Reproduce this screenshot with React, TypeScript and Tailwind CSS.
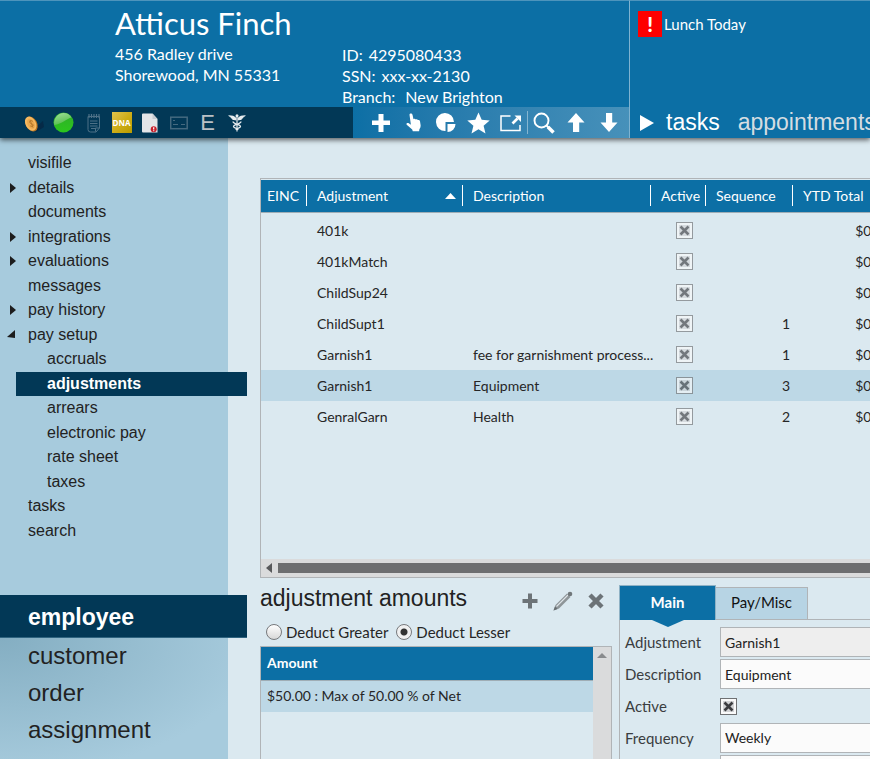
import type { ReactNode } from "react";
import clsx from "clsx";

const menu = [
  { label: "visifile" },
  { label: "details", arrow: "closed" },
  { label: "documents" },
  { label: "integrations", arrow: "closed" },
  { label: "evaluations", arrow: "closed" },
  { label: "messages" },
  { label: "pay history", arrow: "closed" },
  { label: "pay setup", arrow: "open" },
  { label: "accruals", child: true },
  { label: "adjustments", child: true, active: true },
  { label: "arrears", child: true },
  { label: "electronic pay", child: true },
  { label: "rate sheet", child: true },
  { label: "taxes", child: true },
  { label: "tasks" },
  { label: "search" },
];

const sections = ["customer", "order", "assignment"];

const rows = [
  { name: "401k", description: "", sequence: "" },
  { name: "401kMatch", description: "", sequence: "" },
  { name: "ChildSup24", description: "", sequence: "" },
  { name: "ChildSupt1", description: "", sequence: "1" },
  { name: "Garnish1", description: "fee for garnishment process...", sequence: "1" },
  { name: "Garnish1", description: "Equipment", sequence: "3", selected: true },
  { name: "GenralGarn", description: "Health", sequence: "2" },
];

function IconButton({ label, className, children }: { label: string; className?: string; children: ReactNode }) {
  return (
    <button type="button" aria-label={label} className={clsx("flex items-center justify-center leading-none", className)}>
      {children}
    </button>
  );
}

function Check({ id, label, muted }: { id?: string; label?: string; muted?: boolean }) {
  return (
    <span className={clsx("inline-grid size-[17px] align-middle", muted && "opacity-65")}>
      <input
        id={id}
        type="checkbox"
        defaultChecked
        aria-label={label}
        className="col-start-1 row-start-1 size-[17px] appearance-none border border-[#6f7173] bg-[#d2d3d5] shadow-[inset_0_0_0_2px_#fafafa]"
      />
      <svg viewBox="0 0 17 17" className="pointer-events-none col-start-1 row-start-1 size-[17px]">
        <path d="M4.500 4.500l8 8M12.500 4.500l-8 8" stroke="#3c3d40" strokeWidth="2.600" />
      </svg>
    </span>
  );
}

function StatusBar() {
  return (
    <div className="flex w-[353px] bg-[#023856] pl-5">
      <IconButton label="Pay" className="w-7">
        <svg width="24" height="24" viewBox="0 0 24 24">
          <path d="M12 18l9-8 1 6-8 5z" fill="#052a47" />
          <ellipse cx="9.5" cy="13" rx="5.6" ry="8" transform="rotate(-28 9.5 13)" fill="#b87420" />
          <ellipse cx="8.7" cy="12.6" rx="5.2" ry="7.6" transform="rotate(-28 8.7 12.6)" fill="#f6b961" />
          <ellipse cx="9" cy="12.8" rx="3.4" ry="5.4" transform="rotate(-28 9 12.8)" fill="#eba94e" />
          <path d="M10.8 10.4c-1.4-1.5-4-.4-3 1.3.9 1.4 3 .7 3.4 2.3.3 1.6-2 2-3 .8M8 9l3 7.6" stroke="#b97a2c" fill="none" />
        </svg>
      </IconButton>
      <IconButton label="Status" className="w-[31px]">
        <svg width="21" height="21" viewBox="0 0 21 21">
          <defs>
            <linearGradient id="green" x1="0" y1="0" x2="0" y2="1">
              <stop offset="0" stopColor="#2fae2a" />
              <stop offset="1" stopColor="#2cc61d" />
            </linearGradient>
            <linearGradient id="shine" x1="0" y1="0" x2="0.4" y2="1">
              <stop offset="0" stopColor="#a2e09b" />
              <stop offset="1" stopColor="#54bd4b" />
            </linearGradient>
          </defs>
          <circle cx="10.5" cy="10.5" r="10" fill="url(#green)" />
          <path d="M1.200 13C.300 6 5 1 10.500 1c4 0 6.700 2 8 4.500C14 6.500 9 12 1.200 13z" fill="url(#shine)" />
        </svg>
      </IconButton>
      <IconButton label="Notes" className="w-[29px]">
        <svg width="15" height="20" viewBox="0 0 15 20" fill="none" stroke="#4d7187">
          <path d="M2 3.500h11.500V15L10 19H4.500a2.500 2.500 0 0 1-2.500-2.500z" />
          <path d="M3 1v4M5.500 1v4M8 1v4M10.500 1v4M13 1v4" strokeWidth="1.200" />
          <path d="M4 8h7.500M4 10.500h7.500M4 13h7.500M5 15.500h4M9.500 18.500v-3.500h4" />
        </svg>
      </IconButton>
      <IconButton label="DNA" className="w-[27px]">
        <span className="flex h-[21px] w-5 items-center justify-center bg-linear-to-br from-[#dfc34a] via-[#cfae17] to-[#b99b00] font-['Open_Sans',sans-serif] text-[8px] font-bold text-white">
          DNA
        </span>
      </IconButton>
      <IconButton label="Document" className="w-[29px]">
        <svg width="16" height="20" viewBox="0 0 16 20">
          <path d="M0 1.500A1 1 0 0 1 1 .500h9.500L15.500 6v13.500H1a1 1 0 0 1-1-1z" fill="#e3e5e8" />
          <path d="M10.500.500V6h5z" fill="#c6cbd1" />
          <circle cx="11.700" cy="16.200" r="3" fill="#c8202c" />
          <path d="M11.700 14.200v2.300M11.700 17.200v1" stroke="#fff" strokeWidth="1.200" />
        </svg>
      </IconButton>
      <IconButton label="Card" className="w-[29px]">
        <svg width="18" height="14" viewBox="0 0 18 14" fill="none" stroke="#44697f">
          <rect x=".7" y="1.200" width="16.500" height="11.500" strokeWidth="1.500" />
          <path d="M3 4.500h2M3 8.500h5M11 8.500h4" strokeWidth="1.200" />
        </svg>
      </IconButton>
      <IconButton label="Eligibility" className="w-[29px] font-['Liberation_Sans',sans-serif] text-[22px] text-[#b9c0c6]">
        E
      </IconButton>
      <IconButton label="Medical" className="w-[29px]">
        <svg width="18" height="18" viewBox="0 0 18 18" fill="none" stroke="#e6ecef">
          <circle cx="9" cy="1.800" r="1.500" fill="#e6ecef" stroke="none" />
          <path d="M9 2v15.500" strokeWidth="1.200" />
          <path
            d="M8.300 4C6.500 1.800 3.500 1.200.300 1.300c.4 1.100 1.200 1.600 2.200 1.800-.2.900.5 1.500 1.600 1.600-.1.900.6 1.400 1.700 1.400L8.300 6.500zM9.700 4c1.800-2.200 4.800-2.800 8-2.700-.4 1.100-1.200 1.600-2.200 1.800.2.900-.5 1.500-1.600 1.600.1.900-.6 1.400-1.700 1.400l-2.500.4z"
            fill="#e6ecef"
            stroke="none"
          />
          <path d="M5 7.500c0 3 7.500 2.500 7.500 5 0 1.800-4.500 1.500-4.500 3.500M13 7.500c0 3-7.500 2.500-7.500 5 0 1.800 4.500 1.500 4.500 3.500" strokeWidth="1.300" />
        </svg>
      </IconButton>
    </div>
  );
}

function Toolbar() {
  return (
    <div className="flex flex-1 bg-linear-to-r from-[#0c6fa5] to-[#4791ba] pr-1 pl-3 text-white">
      <IconButton label="Add" className="flex-1">
        <svg width="18" height="18" viewBox="0 0 18 18" fill="currentColor">
          <path d="M6.500 0h5v6.500H18v4.500h-6.500V18h-5v-7H0V6.500h6.500z" />
        </svg>
      </IconButton>
      <IconButton label="Select" className="flex-1">
        <svg width="16" height="19" viewBox="0 0 16 19" fill="currentColor">
          <path d="M3.500 1.800c0-1.600 2.500-1.800 3 0l1 4.500c.7-.7 1.800-.6 2.200.2.700-.6 1.800-.4 2.200.5.900-.3 1.900.2 2.100 1.200l.6 3.800c.2 1.500-.1 2.800-1.200 4.200l-.3 2H6.800l-.6-1.700L.700 11.700c-.8-1.100.4-2.300 1.700-1.600l2.500 1.700z" />
        </svg>
      </IconButton>
      <IconButton label="Reports" className="flex-1">
        <svg width="20" height="20" viewBox="0 0 20 20" fill="currentColor">
          <path d="M9.500 9h8.500A9 9 0 1 0 9.500 18z" />
          <path d="M11.500 11h8a8 8 0 0 1-8 8z" />
        </svg>
      </IconButton>
      <IconButton label="Favorite" className="flex-1">
        <svg width="23" height="22" viewBox="0 0 23 22" fill="currentColor">
          <path d="M11.500.500l3.200 7.300 8 .7-6.100 5.200 1.900 7.800-7-4.200-7 4.200 1.900-7.800L.300 8.500l8-.7z" />
        </svg>
      </IconButton>
      <IconButton label="Open in new window" className="flex-1">
        <svg width="22" height="18" viewBox="0 0 22 18" fill="none" stroke="currentColor">
          <path d="M10.500 2H1v14.500h19V11" strokeWidth="1.500" />
          <path d="M12.500 9.500l5-5" strokeWidth="2.600" />
          <path d="M14.500 1.500H21V8z" fill="currentColor" stroke="none" />
        </svg>
      </IconButton>
      <span className="my-1 w-px bg-white/40" />
      <IconButton label="Search" className="flex-1">
        <svg width="22" height="22" viewBox="0 0 22 22" fill="none" stroke="currentColor">
          <circle cx="8.500" cy="8.500" r="7" strokeWidth="1.900" />
          <path d="M13.500 13.500l2.500 2.500" strokeWidth="2" />
          <path d="M15 15l5.500 5.500" strokeWidth="3.500" />
        </svg>
      </IconButton>
      <IconButton label="Previous" className="flex-1">
        <svg width="18" height="19" viewBox="0 0 18 19" fill="currentColor">
          <path d="M9 0l8.500 9.500h-5.300V19H6V9.500H.500z" />
        </svg>
      </IconButton>
      <IconButton label="Next" className="flex-1">
        <svg width="18" height="19" viewBox="0 0 18 19" fill="currentColor">
          <path d="M9 19L.500 9.500H6V0h6.200v9.500h5.300z" />
        </svg>
      </IconButton>
    </div>
  );
}

function Header() {
  return (
    <header className="relative z-10 flex h-[138px] shrink-0 bg-[#0c6fa5] text-white shadow-[0_2px_5px_rgba(0,0,0,0.6)]">
      <div className="flex min-w-0 flex-1 flex-col border-t border-[#4d94bc]">
        <div className="flex h-[106px] shrink-0 items-end pl-[115px] text-base leading-[21px]">
          <div className="w-[227px] self-start pt-0.5">
            <h1 className="text-[31px] leading-[40px]">Atticus Finch</h1>
            <p>456 Radley drive</p>
            <p>Shorewood, MN 55331</p>
          </div>
          <dl className="whitespace-nowrap">
            <div className="flex gap-1.5">
              <dt>ID:</dt>
              <dd>4295080433</dd>
            </div>
            <div className="flex gap-1.5">
              <dt>SSN:</dt>
              <dd>xxx-xx-2130</dd>
            </div>
            <div className="flex gap-2.5">
              <dt>Branch:</dt>
              <dd>New Brighton</dd>
            </div>
          </dl>
        </div>
        <div className="flex flex-1">
          <StatusBar />
          <Toolbar />
        </div>
      </div>

      <div className="flex w-[241px] flex-col justify-between overflow-hidden border-t border-l border-t-[#4d94bc] border-l-[#7fb3d1] pl-2">
        <div className="flex items-center pt-2.5">
          <span className="flex h-[26px] w-6 items-center justify-center bg-[#fe0000] text-xl font-black">!</span>
          <span className="pl-0.5 text-[15px]">Lunch Today</span>
        </div>
        <div className="flex h-[31px] items-center font-['Liberation_Sans',sans-serif] text-[23px] whitespace-nowrap">
          <svg width="14" height="16" viewBox="0 0 14 16" className="ml-0.5 shrink-0" fill="currentColor">
            <path d="M0 0l14 8-14 8z" />
          </svg>
          <a href="#tasks" className="pl-3">tasks</a>
          <a href="#appointments" className="pl-[18px] text-[#d5dde2]">appointments</a>
        </div>
      </div>
    </header>
  );
}

function Sidebar() {
  return (
    <aside className="flex w-[228px] shrink-0 flex-col bg-[#a7cbdd] font-['Liberation_Sans',sans-serif] text-[#222]">
      <nav className="pt-[13px]">
        <ul className="grid h-98 auto-rows-fr text-base">
          {menu.map((item) => (
            <li key={item.label} className={clsx("flex items-center", item.active && "-mr-[19px] ml-4 bg-[#023856]")}>
              {!item.active && (
                <span className={clsx("shrink-0 pl-[7px]", item.child ? "w-[47px]" : "w-7")}>
                  {item.arrow === "closed" && (
                    <svg width="10" height="10" viewBox="0 0 10 10" className="ml-0.5" fill="#1d1d1d">
                      <path d="M1 0l6 5-6 5z" />
                    </svg>
                  )}
                  {item.arrow === "open" && (
                    <svg width="10" height="10" viewBox="0 0 10 10" fill="#1d1d1d">
                      <path d="M8 0v8L0 7z" />
                    </svg>
                  )}
                </span>
              )}
              <a href={`#${item.label}`} className={clsx(item.active && "pl-[31px] font-bold text-white")}>
                {item.label}
              </a>
            </li>
          ))}
        </ul>
      </nav>

      <nav className="mt-13 flex flex-1 flex-col">
        <a
          href="#employee"
          className="-mr-[19px] flex h-[43px] items-center border-b border-[#2f6480] bg-[#023856] pt-0.5 pl-7 text-[23px] font-bold text-white"
        >
          employee
        </a>
        <div className="flex flex-1 flex-col bg-[radial-gradient(ellipse_at_0%_0%,#84aec2,#a7cbdd_80%)] text-2xl">
          {sections.map((section) => (
            <a key={section} href={`#${section}`} className="flex h-[37px] items-center pb-0.5 pl-7">
              {section}
            </a>
          ))}
        </div>
      </nav>
    </aside>
  );
}

const th = "relative h-[32px] pl-[11px] pr-2.5 text-left font-normal whitespace-nowrap";
const divider = "before:absolute before:top-[5px] before:left-0 before:h-[21px] before:w-px before:bg-white";

function AdjustmentsTable() {
  return (
    <section className="flex h-100 flex-col border border-r-0 border-[#b0b4b7] pt-px">
      <div className="flex-1 overflow-hidden">
        <table className="w-[640px] table-fixed border-collapse text-sm">
          <colgroup>
            <col className="w-[45px]" />
            <col className="w-[156px]" />
            <col className="w-[188px]" />
            <col className="w-[55px]" />
            <col className="w-[87px]" />
            <col className="w-[109px]" />
          </colgroup>
          <thead>
            <tr className="border-b border-[#9fadb5] bg-[#0c6fa5] text-white">
              <th className="pl-1.5 text-left font-normal">EINC</th>
              <th className={clsx(th, divider)}>
                <span className="flex items-center justify-between">
                  Adjustment
                  <svg width="11" height="6" viewBox="0 0 11 6" className="-mr-1" fill="currentColor">
                    <path d="M5.500 0L11 6H0z" />
                  </svg>
                </span>
              </th>
              <th className={clsx(th, divider)}>Description</th>
              <th className={clsx(th, divider)}>Active</th>
              <th className={clsx(th, divider)}>Sequence</th>
              <th className={clsx(th, divider)}>YTD Total</th>
            </tr>
          </thead>
          <tbody className="whitespace-nowrap text-[#262626] before:block before:h-0.5 before:content-['']">
            {rows.map((row, i) => (
              <tr key={i} className={clsx("h-[31px]", row.selected && "bg-[#bdd8e6]")}>
                <td />
                <td className="pt-px pl-[11px]">{row.name}</td>
                <td className="pt-px pl-[11px]">{row.description}</td>
                <td className="pl-[26px] leading-none">
                  <Check label={`${row.name} active`} muted />
                </td>
                <td className="pt-px pr-0.5 text-right">{row.sequence}</td>
                <td className="pt-px pr-2.5 text-right">$0.00</td>
              </tr>
            ))}
          </tbody>
        </table>
      </div>
      <div className="flex h-[18px] items-center bg-[#dadbdc] pl-[5px]">
        <svg width="6" height="10" viewBox="0 0 6 10" fill="#58595b">
          <path d="M6 0v10L0 5z" />
        </svg>
        <div className="ml-1.5 h-2.5 flex-1 bg-[#6d6e70]" />
      </div>
    </section>
  );
}

function Radio({ id, label, checked }: { id: string; label: string; checked?: boolean }) {
  return (
    <label htmlFor={id} className="flex items-center gap-1">
      <input
        id={id}
        type="radio"
        name="deduct"
        defaultChecked={checked}
        className="size-4 appearance-none rounded-full border border-[#77797c] bg-linear-to-b from-white to-[#d8d8d8] checked:bg-[radial-gradient(circle,#333_0_3px,#f0f0f0_4px)]"
      />
      {label}
    </label>
  );
}

function Amounts() {
  return (
    <section className="flex w-[352px] shrink-0 flex-col">
      <div className="flex h-[42px] items-center justify-between pr-[7px]">
        <h2 className="pb-0.5 font-['Liberation_Sans',sans-serif] text-[23px] text-[#222]">adjustment amounts</h2>
        <div className="flex items-center gap-3.5 pt-1 text-[#6c7377]">
          <IconButton label="Add amount">
            <svg width="18" height="18" viewBox="0 0 18 18" fill="currentColor">
              <path d="M7 1.500h4v5.500h5.500v4H11v5.500H7V11H1.500V7H7z" />
            </svg>
          </IconButton>
          <IconButton label="Edit amount">
            <svg width="20" height="20" viewBox="0 0 20 20">
              <path d="M.500 19.500L2.500 14 14 2.500l3.500 3.500L6 17.500z" fill="#8e9598" />
              <path d="M3.500 15.500L15 4" stroke="#dfe5e8" strokeWidth="1.100" />
              <path d="M.500 19.500l1.500-4 2.500 2.500z" fill="#666d70" />
              <circle cx="17" cy="3" r="2.300" fill="#70777a" />
            </svg>
          </IconButton>
          <IconButton label="Delete amount">
            <svg width="18" height="18" viewBox="0 0 18 18" stroke="currentColor">
              <path d="M3 3l12 12M15 3L3 15" strokeWidth="4.500" />
            </svg>
          </IconButton>
        </div>
      </div>
      <div className="flex h-[26px] items-center gap-2 pb-0.5 pl-1.5 text-[15px] text-[#262626]">
        <Radio id="deduct-greater" label="Deduct Greater" />
        <Radio id="deduct-lesser" label="Deduct Lesser" checked />
      </div>
      <div className="flex flex-1 border border-b-0 border-[#b0b4b7]">
        <div className="flex-1 text-sm">
          <table className="w-full border-collapse">
            <thead>
              <tr className="border-b border-[#9fadb5] bg-[#0c6fa5] text-white">
                <th className="h-[33px] pl-1.5 text-left font-bold">Amount</th>
              </tr>
            </thead>
            <tbody>
              <tr className="bg-[#bdd8e6] text-[#262626]">
                <td className="h-8 pl-1.5">$50.00 : Max of 50.00 % of Net</td>
              </tr>
            </tbody>
          </table>
        </div>
        <div className="flex w-[18px] justify-center bg-[#dadbdc] pt-1.5">
          <svg width="10" height="5" viewBox="0 0 10 5" fill="#898b8d">
            <path d="M5 0l5 5H0z" />
          </svg>
        </div>
      </div>
    </section>
  );
}

function Details() {
  const field = "min-w-0 flex-1 h-[30px] border border-r-0 border-[#b0b4b7] px-1 text-sm text-[#222]";
  const row = "flex h-8 items-center";
  const label = "w-[95px] shrink-0 text-[15px] text-[#3a3d40]";

  return (
    <section className="flex min-w-0 flex-1 flex-col pt-[7px]">
      <div role="tablist" className="flex h-[35px] items-end text-[15px]">
        <button
          type="button"
          role="tab"
          aria-selected="true"
          className="relative h-[35px] w-[97px] border border-b-0 border-[#8fb2c5] bg-[#0c6fa5] pb-0.5 font-bold text-white"
        >
          Main
          <svg width="32" height="7" viewBox="0 0 32 7" className="absolute top-full left-8" fill="#0c6fa5">
            <path d="M0 0h32L16 7z" />
          </svg>
        </button>
        <button
          type="button"
          role="tab"
          aria-selected="false"
          className="h-[33px] w-[92px] border border-l-0 border-[#b0b4b7] bg-[#b7d4e4] pb-0.5 text-[#111]"
        >
          Pay/Misc
        </button>
        <div className="flex-1 self-stretch border-b border-[#b0b4b7]" />
      </div>
      <div className="flex-1 border-l border-[#b0b4b7] pt-1.5 pl-[5px]">
        <div className={row}>
          <label htmlFor="adjustment" className={label}>Adjustment</label>
          <input id="adjustment" defaultValue="Garnish1" readOnly className={clsx(field, "bg-[#eeeeee]")} />
        </div>
        <div className={row}>
          <label htmlFor="description" className={label}>Description</label>
          <input id="description" defaultValue="Equipment" className={clsx(field, "bg-[#fbfbfb]")} />
        </div>
        <div className={row}>
          <label htmlFor="active" className={label}>Active</label>
          <Check id="active" />
        </div>
        <div className={row}>
          <label htmlFor="frequency" className={label}>Frequency</label>
          <select id="frequency" className={clsx(field, "appearance-none bg-[#fbfbfb]")}>
            <option>Weekly</option>
          </select>
        </div>
        <div className={row}>
          <label htmlFor="start" className={label} />
          <input id="start" className={clsx(field, "bg-[#fbfbfb]")} />
        </div>
      </div>
    </section>
  );
}

export default function App() {
  return (
    <div className="flex h-screen flex-col overflow-hidden bg-[#dbe9f0] font-['Lato',sans-serif]">
      <Header />
      <div className="flex min-h-0 flex-1">
        <Sidebar />
        <main className="flex min-w-0 flex-1 flex-col pt-10 pl-8">
          <AdjustmentsTable />
          <div className="flex min-h-0 flex-1 gap-[7px]">
            <Amounts />
            <Details />
          </div>
        </main>
      </div>
    </div>
  );
}
